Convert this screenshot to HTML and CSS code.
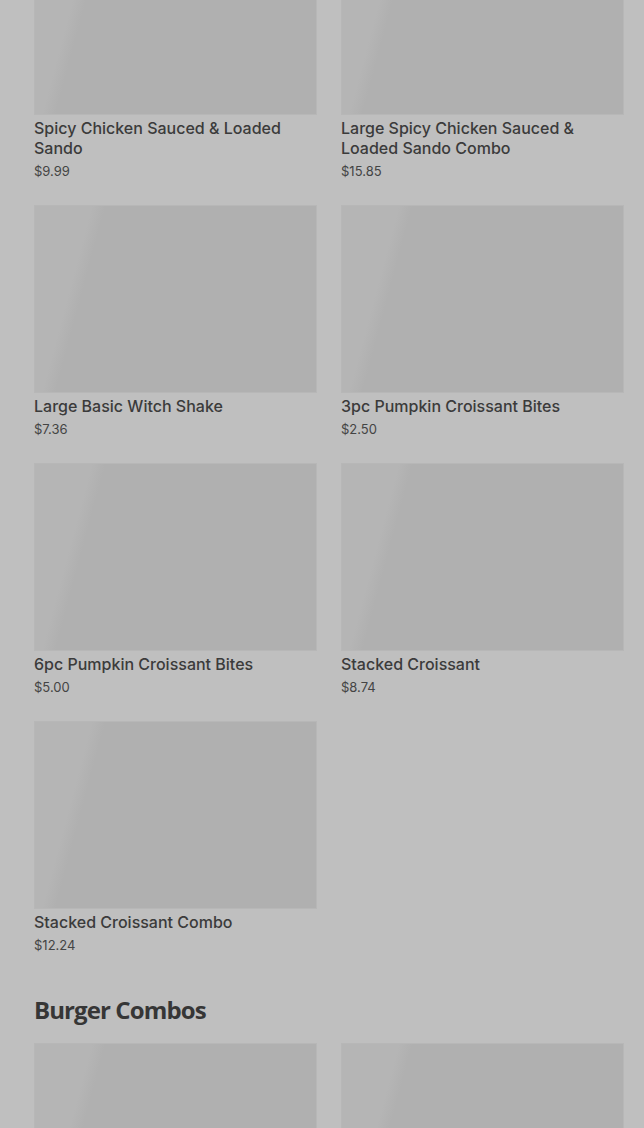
FILE: index.html
```
<!DOCTYPE html>
<html>
<head>
	<meta charset="utf-8">
	<title>Menu</title>
	<link rel="stylesheet" href="styles.css">
</head>
<body>
<div class="overlay">
<section class="category scrolled">
	<div class="grid">
		<div class="item">
			<div class="thumb"></div>
			<div class="name">Spicy Chicken Sauced &amp; Loaded Sando</div>
			<div class="price">$9.99</div>
		</div>
		<div class="item">
			<div class="thumb"></div>
			<div class="name">Large Spicy Chicken Sauced &amp; Loaded Sando Combo</div>
			<div class="price">$15.85</div>
		</div>
		<div class="item">
			<div class="thumb"></div>
			<div class="name">Large Basic Witch Shake</div>
			<div class="price">$7.36</div>
		</div>
		<div class="item">
			<div class="thumb"></div>
			<div class="name">3pc Pumpkin Croissant Bites</div>
			<div class="price">$2.50</div>
		</div>
		<div class="item">
			<div class="thumb"></div>
			<div class="name">6pc Pumpkin Croissant Bites</div>
			<div class="price">$5.00</div>
		</div>
		<div class="item">
			<div class="thumb"></div>
			<div class="name">Stacked Croissant</div>
			<div class="price">$8.74</div>
		</div>
		<div class="item">
			<div class="thumb"></div>
			<div class="name">Stacked Croissant Combo</div>
			<div class="price">$12.24</div>
		</div>
	</div>
</section>
<section class="category">
	<h2>Burger Combos</h2>
	<div class="grid">
		<div class="item">
			<div class="thumb"></div>
		</div>
		<div class="item">
			<div class="thumb"></div>
		</div>
	</div>
</section>
</div>
</body>
</html>
```

FILE: styles.css
```
html, body {
	margin: 0;
	padding: 0;
	background: #bfbfbf;
}

body {
	font-family: Inter, "Liberation Sans", sans-serif;
	color: #3b3b3b;
	overflow: hidden;
}

.overlay {
	padding: 0 20px 0 34px;
}

/* page is scrolled part way down the menu */
.category.scrolled {
	margin-top: -73px;
}

.grid {
	display: grid;
	grid-template-columns: 1fr 1fr;
	column-gap: 24px;
	row-gap: 24px;
}

.item {
	min-width: 0;
}

.thumb {
	height: 188px;
	box-sizing: border-box;
	border: 1px solid #b7b7b7;
	background: linear-gradient(105deg, #b5b5b5 0, #b5b5b5 55px, #b0b0b0 68px, #b0b0b0 100%);
}

.name {
	margin-top: 3px;
	font-size: 16px;
	line-height: 20px;
	font-weight: 500;
	padding-right: 20px;
}

.price {
	margin-top: 3px;
	font-size: 13px;
	line-height: 20px;
	color: #444;
}

h2 {
	margin: 39px 0 17px 0;
	font-family: "Open Sans", sans-serif;
	font-size: 24px;
	line-height: 32px;
	font-weight: 700;
	letter-spacing: -0.9px;
	color: #363636;
}
```
